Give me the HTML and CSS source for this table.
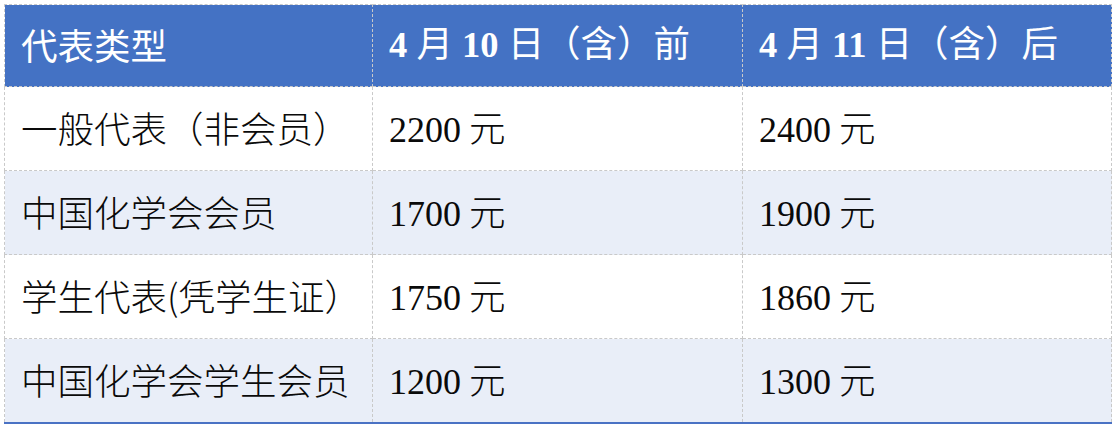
FILE: index.html
```html
<!DOCTYPE html>
<html lang="zh">
<head>
<meta charset="utf-8">
<link rel="stylesheet" href="styles.css">
</head>
<body>
<table class="fees">
  <thead>
    <tr>
      <th class="c1">代表类型</th>
      <th class="c2"><b>4</b> 月 <b>10</b> 日（含）前</th>
      <th class="c3"><b>4</b> 月 <b>11</b> 日（含）后</th>
    </tr>
  </thead>
  <tbody>
    <tr>
      <td>一般代表（非会员）</td>
      <td><span class="num">2200</span> 元</td>
      <td><span class="num">2400</span> 元</td>
    </tr>
    <tr class="alt">
      <td>中国化学会会员</td>
      <td><span class="num">1700</span> 元</td>
      <td><span class="num">1900</span> 元</td>
    </tr>
    <tr>
      <td>学生代表(凭学生证）</td>
      <td><span class="num">1750</span> 元</td>
      <td><span class="num">1860</span> 元</td>
    </tr>
    <tr class="alt last">
      <td>中国化学会学生会员</td>
      <td><span class="num">1200</span> 元</td>
      <td><span class="num">1300</span> 元</td>
    </tr>
  </tbody>
</table>
</body>
</html>
```

FILE: styles.css
```css
html, body {
  margin: 0;
  padding: 0;
  background: #ffffff;
}

body {
  padding: 4px 0 0 4px;
  font-family: "Liberation Serif", "Noto Sans CJK SC", serif;
}

.fees {
  border-collapse: collapse;
  table-layout: fixed;
  width: 1108px;
}

.fees th,
.fees td {
  border: 1px dashed #c9c9c9;
  padding: 0 0 0 16px;
  text-align: left;
  vertical-align: middle;
  white-space: nowrap;
  font-size: 36.5px;
  line-height: 1;
}

.fees th {
  height: 81px;
  background: #4472c4;
  color: #ffffff;
  font-weight: 400;
  font-family: "Liberation Serif", "Noto Sans CJK SC", serif;
}

.fees th b {
  font-weight: 700;
}

.fees th.c1 {
  width: 351px;
  font-family: "Noto Sans CJK SC", sans-serif;
  font-weight: 400;
}

.fees th.c2 {
  width: 353px;
}

.fees td {
  height: 83px;
  color: #0a0a0a;
  font-family: "Noto Sans CJK SC", sans-serif;
  font-weight: 300;
}

.fees td .num {
  font-family: "Liberation Serif", serif;
  font-size: 36px;
  font-weight: 400;
}

.fees tr.alt td {
  background: #e9eef8;
}

.fees tr.last td {
  border-bottom: 2px solid #4a72c4;
}
```
